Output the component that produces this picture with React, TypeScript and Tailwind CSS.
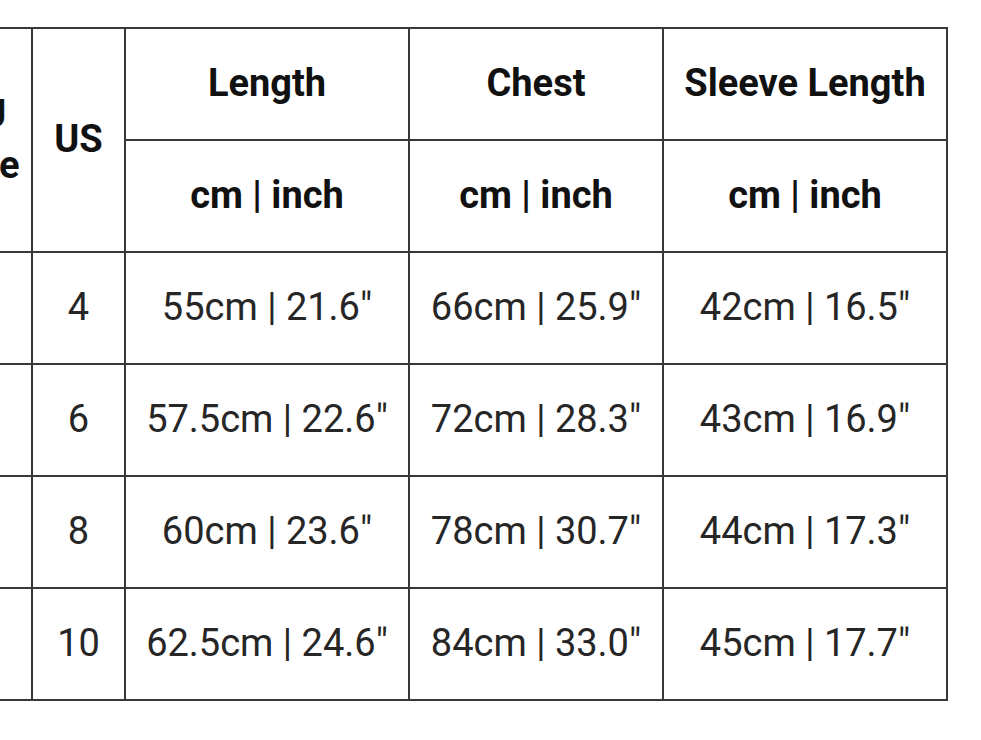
const rows = [
  { us: "4", length: "55cm | 21.6\"", chest: "66cm | 25.9\"", sleeve: "42cm | 16.5\"" },
  { us: "6", length: "57.5cm | 22.6\"", chest: "72cm | 28.3\"", sleeve: "43cm | 16.9\"" },
  { us: "8", length: "60cm | 23.6\"", chest: "78cm | 30.7\"", sleeve: "44cm | 17.3\"" },
  { us: "10", length: "62.5cm | 24.6\"", chest: "84cm | 33.0\"", sleeve: "45cm | 17.7\"" },
];

const head = "bg-white flex items-center justify-center text-center font-bold text-[#111]";
const cell = "bg-white flex items-center justify-center text-center text-[#262626]";

export default function App() {
  return (
    <div className="w-full h-[740px] overflow-hidden bg-white font-['Roboto',sans-serif] text-[38px] leading-[1.35]">
      <div className="mt-[27px] ml-[-67px] inline-grid grid-cols-[96px_91px_282px_252px_282px] grid-rows-[110px_110px_110px_110px_110px_110px] gap-[2px] p-[2px] bg-[#383838]">
        {/* header */}
        <div className={`${head} row-span-2`}>
          EU
          <br />
          Size
        </div>
        <div className={`${head} row-span-2`}>US</div>
        <div className={head}>Length</div>
        <div className={head}>Chest</div>
        <div className={head}>Sleeve Length</div>
        <div className={head}>cm | inch</div>
        <div className={head}>cm | inch</div>
        <div className={head}>cm | inch</div>

        {/* body */}
        {rows.map((r) => (
          <div key={r.us} className="contents">
            <div className={cell}></div>
            <div className={cell}>{r.us}</div>
            <div className={cell}>{r.length}</div>
            <div className={cell}>{r.chest}</div>
            <div className={cell}>{r.sleeve}</div>
          </div>
        ))}
      </div>
    </div>
  );
}
